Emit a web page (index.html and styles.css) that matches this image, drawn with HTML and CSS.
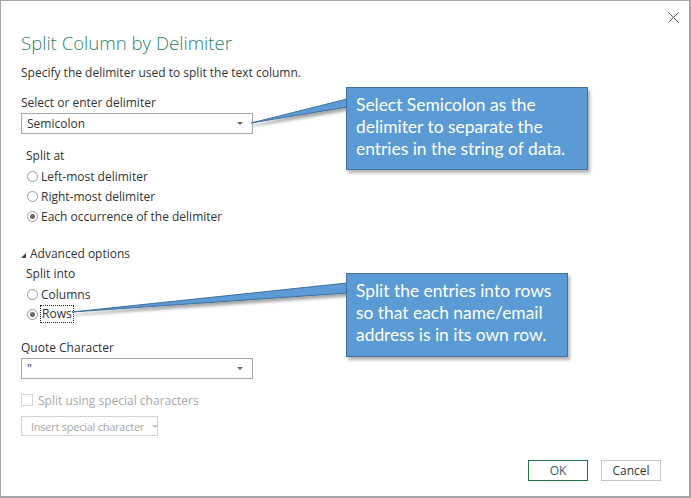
FILE: index.html
```html
<!DOCTYPE html>
<html lang="en">
<head>
<meta charset="utf-8">
<title>Split Column by Delimiter</title>
<link rel="stylesheet" href="styles.css">
</head>
<body>
<div class="dialog">
  <button class="close" aria-label="Close">
    <svg width="11" height="11" viewBox="0 0 11 11"><path d="M0.5 0.5 L10.5 10.5 M10.5 0.5 L0.5 10.5" stroke="#555" stroke-width="1" fill="none"/></svg>
  </button>

  <h1 class="title">Split Column by Delimiter</h1>
  <p class="desc">Specify the delimiter used to split the text column.</p>

  <div class="field-label">Select or enter delimiter</div>
  <div class="select">
    <span>Semicolon</span>
    <span class="caret"></span>
  </div>

  <div class="group group-split-at">
    <div class="group-label">Split at</div>
    <label class="radio"><span class="dot"></span>Left-most delimiter</label>
    <label class="radio"><span class="dot"></span>Right-most delimiter</label>
    <label class="radio"><span class="dot checked"></span>Each occurrence of the delimiter</label>
  </div>

  <div class="advanced"><span class="tri"></span>Advanced options</div>

  <div class="group">
    <div class="group-label">Split into</div>
    <label class="radio"><span class="dot"></span>Columns</label>
    <label class="radio"><span class="dot checked"></span><span class="focus">Rows</span></label>
  </div>

  <div class="field-label quote-label">Quote Character</div>
  <div class="select">
    <span>"</span>
    <span class="caret"></span>
  </div>

  <label class="check"><span class="box"></span>Split using special characters</label>
  <div class="insert-btn"><span class="insert-text">Insert special character</span><span class="caret light"></span></div>

  <div class="footer">
    <button class="btn btn-ok">OK</button>
    <button class="btn btn-cancel">Cancel</button>
  </div>

  <svg class="wedges" width="691" height="498" viewBox="0 0 691 498">
    <defs>
      <filter id="sh" x="-10%" y="-50%" width="130%" height="200%">
        <feGaussianBlur in="SourceAlpha" stdDeviation="1.5"/>
        <feOffset dx="2" dy="3" result="b"/>
        <feComponentTransfer><feFuncA type="linear" slope="0.35"/></feComponentTransfer>
        <feMerge><feMergeNode/><feMergeNode in="SourceGraphic"/></feMerge>
      </filter>
    </defs>
    <polygon points="347,99 251,123 347,107" fill="#5b9bd5" stroke="#41719c" stroke-width="1" filter="url(#sh)"/>
    <polygon points="347,283 72,312 347,293" fill="#5b9bd5" stroke="#41719c" stroke-width="1" filter="url(#sh)"/>
  </svg>

  <div class="callout callout-1">Select Semicolon as the delimiter to separate the entries in the string of data.</div>
  <div class="callout callout-2">Split the entries into rows so that each name/email address is in its own row.</div>
</div>
</body>
</html>
```

FILE: styles.css
```css
* { box-sizing: border-box; }

html, body {
  margin: 0;
  padding: 0;
  background: #ffffff;
}

.dialog {
  position: relative;
  width: 691px;
  height: 498px;
  border: 1px solid #a6a6a6;
  border-right-width: 2px;
  border-bottom-width: 2px;
  padding: 30px 20px 0 20px;
  font-family: "Open Sans", "Noto Sans", sans-serif;
  font-size: 12px;
  color: #333333;
  overflow: hidden;
}

.close {
  position: absolute;
  top: 10px;
  right: 9px;
  width: 13px;
  height: 13px;
  padding: 1px;
  border: 0;
  background: transparent;
  display: flex;
}

.title {
  margin: 0;
  font-size: 18.6px;
  line-height: 24px;
  font-weight: 300;
  color: #2f7f6e;
}

.desc {
  margin: 8px 0 0 0;
  line-height: 20px;
}

.field-label {
  margin-top: 10px;
  line-height: 20px;
}

.select {
  width: 232px;
  height: 21px;
  border: 1px solid #a9a9a9;
  display: flex;
  align-items: center;
  justify-content: space-between;
  padding: 0 9px 0 5px;
  line-height: 19px;
}

.caret {
  width: 0;
  height: 0;
  border-left: 3px solid transparent;
  border-right: 3px solid transparent;
  border-top: 3px solid #666;
}

.caret.light {
  border-top-color: #c0c0c0;
  margin-left: 8px;
  flex: none;
}

.group {
  padding-left: 5px;
}

.group-split-at {
  margin-top: 12px;
}

.group-label {
  line-height: 20px;
}

.radio {
  display: flex;
  align-items: center;
  height: 20px;
  padding-left: 1px;
}

.dot {
  width: 11px;
  height: 11px;
  border: 1px solid #9a9a9a;
  border-radius: 50%;
  margin-right: 3px;
  display: flex;
  align-items: center;
  justify-content: center;
  background: #fff;
}

.dot.checked::after {
  content: "";
  width: 5px;
  height: 5px;
  border-radius: 50%;
  background: #6a6a6a;
}

.focus {
  outline: 1px dotted #222;
  outline-offset: 0;
  padding: 0 1px;
  line-height: 16px;
}

.advanced {
  margin-top: 18px;
  line-height: 20px;
  display: flex;
  align-items: center;
}

.tri {
  width: 0;
  height: 0;
  border-left: 5px solid transparent;
  border-bottom: 5px solid #444;
  margin-right: 4px;
  margin-top: 2px;
}

.quote-label {
  margin-top: 14px;
}

.check {
  margin-top: 11px;
  display: flex;
  align-items: center;
  height: 20px;
  color: #a8a8a8;
}

.box {
  width: 12px;
  height: 12px;
  border: 1px solid #d4d4d4;
  margin-right: 5px;
}

.insert-btn {
  margin-top: 6px;
  width: 137px;
  height: 20px;
  border: 1px solid #d4d4d4;
  color: #a8a8a8;
  display: flex;
  align-items: center;
  padding-left: 9px;
  white-space: nowrap;
}

.insert-text {
  font-size: 11px;
  letter-spacing: -0.25px;
}

.footer {
  margin-top: 24px;
  display: flex;
  justify-content: flex-end;
  gap: 13px;
  padding-right: 8px;
}

.btn {
  width: 60px;
  height: 21px;
  padding: 0;
  background: #fff;
  font-family: inherit;
  font-size: 12px;
  color: #333;
}

.btn-ok {
  border: 1px solid #217346;
  color: #2c5f7a;
}

.btn-cancel {
  border: 1px solid #c6c6c6;
}

.wedges {
  position: absolute;
  left: -1px;
  top: -1px;
  pointer-events: none;
}

.callout {
  position: absolute;
  background: #5b9bd5;
  border: 1px solid #41719c;
  color: #ffffff;
  font-family: "Lato", "Open Sans", sans-serif;
  font-size: 17.4px;
  line-height: 22px;
  padding: 6px 8px 0 9px;
  box-shadow: 2px 3px 3px rgba(0, 0, 0, 0.3);
}

.callout-1 {
  left: 345px;
  top: 86px;
  width: 242px;
  height: 83px;
}

.callout-2 {
  left: 345px;
  top: 272px;
  width: 222px;
  height: 84px;
}
```
